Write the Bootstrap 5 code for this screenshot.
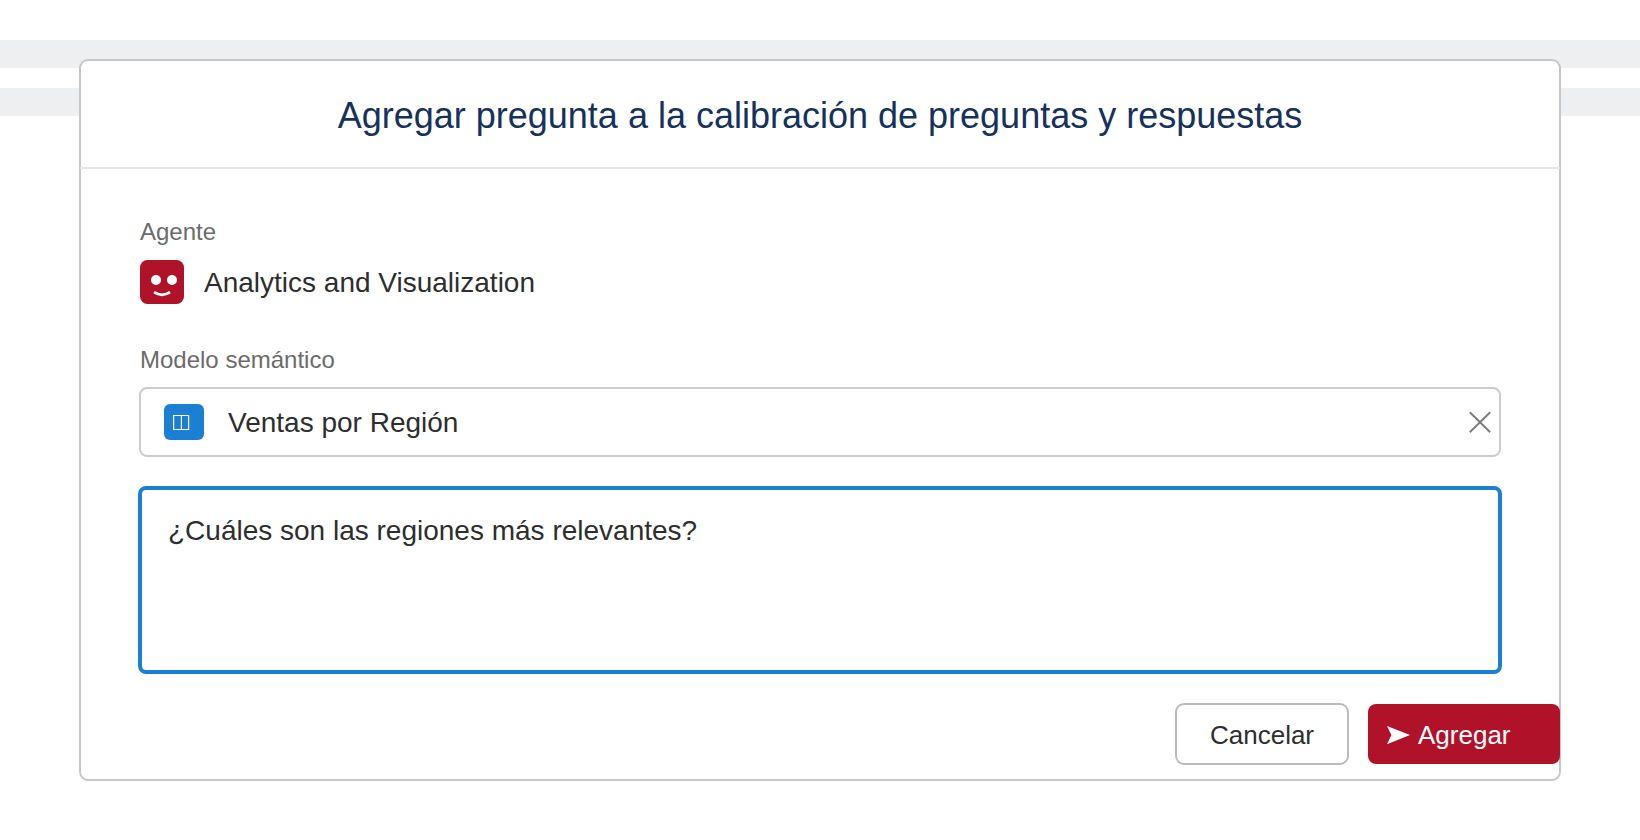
<!DOCTYPE html>
<html lang="es">
<head>
<meta charset="utf-8">
<meta name="viewport" content="width=device-width, initial-scale=1">
<title>Agregar pregunta</title>
<link href="https://cdn.jsdelivr.net/npm/bootstrap@5.3.0/dist/css/bootstrap.min.css" rel="stylesheet">
<style>
body{font-family:"Liberation Sans",Arial,sans-serif;color:#2e2e2e;background:#fff;height:840px;overflow:hidden;font-size:28px;line-height:32px}
.backdrop-bands{padding-top:40px}
.band{height:28px;background:#eeeff1;margin-bottom:20px}
.dialog-box{top:59px;left:79px;width:1482px;height:722px;border:2px solid #c6c6c6;border-radius:9px;background:#fff}
.dialog-head{height:108px;margin:0 -1px;border-bottom:2px solid #e5e5e5;padding-top:34px;color:#16325c;font-size:36px;line-height:41px}
.dialog-main{padding:49px 57px 0}
.field-label{font-size:24px;line-height:28px;color:#6b6b6b;padding-left:2px}
.agent-row{margin:14px 0 42px;height:44px;gap:20px;padding-left:2px}
.agent-row span,.model-name{padding-top:2px}
.agent-icon{width:44px;height:44px}
.model-field{height:70px;margin:13px 1px 0;border:2px solid #ccc;border-radius:8px;padding:0 8px 0 23px}
.model-icon{width:40px;height:36px;border-radius:6px;background:#1b7fd3;margin-right:24px}
.question-field{display:block;width:100%;height:188px;margin-top:29px;border:4px solid #1b80d4;border-radius:8px;padding:25px 26px;resize:none;outline:0;color:inherit;background:#fff}
.dialog-foot{margin:29px -1px 0 0;gap:19px}
.action-btn{font-size:26px;line-height:30px;border-radius:8px;padding:2px 0 0}
.cancel-btn{width:174px;height:62px;border:2px solid #bbb;border-radius:9px;color:#2e2e2e;background:#fff}
.add-btn{width:192px;height:60px;border:0;background:#b01329;color:#fff;padding-left:19px}
.add-btn svg{margin:0 8px 1px 0}
</style>
</head>
<body>
<div class="backdrop-bands"><div class="band"></div><div class="band"></div></div>
<section class="dialog-box position-absolute" role="dialog">
  <header class="dialog-head text-center">Agregar pregunta a la calibración de preguntas y respuestas</header>
  <div class="dialog-main">
    <div class="field-label">Agente</div>
    <div class="agent-row d-flex align-items-center">
      <svg class="agent-icon" viewBox="0 0 44 44"><rect width="44" height="44" rx="7.5" fill="#b01329"/><circle cx="16" cy="20" r="5" fill="#fff"/><circle cx="32" cy="20" r="5" fill="#fff"/><path d="M14 32.2Q22 37.6 30 32.2" fill="none" stroke="#fff" stroke-width="2.6"/></svg>
      <span>Analytics and Visualization</span>
    </div>
    <div class="field-label">Modelo semántico</div>
    <div class="model-field d-flex align-items-center">
      <span class="model-icon"><svg width="40" height="36" class="d-block" fill="none" stroke="#fff" stroke-width="1.2"><path d="M9.6 11.5h15v14h-15zM17.4 11.5v14"/></svg></span>
      <span class="model-name">Ventas por Región</span>
      <svg class="ms-auto" width="22" height="22" stroke="#7b7b7b" stroke-width="1.9"><path d="M.8 1.3l20.4 20M21.2 1.3L.8 21.3"/></svg>
    </div>
    <textarea class="question-field" spellcheck="false">¿Cuáles son las regiones más relevantes?</textarea>
  </div>
  <footer class="dialog-foot d-flex justify-content-end align-items-center">
    <button class="btn action-btn cancel-btn">Cancelar</button>
    <button class="btn action-btn add-btn d-flex align-items-center"><svg width="23" height="20" fill="#fff"><path d="M0 1L23 10 0 19.3 4.4 10z"/></svg>Agregar</button>
  </footer>
</section>
<script src="https://cdn.jsdelivr.net/npm/bootstrap@5.3.0/dist/js/bootstrap.bundle.min.js"></script>
</body>
</html>
